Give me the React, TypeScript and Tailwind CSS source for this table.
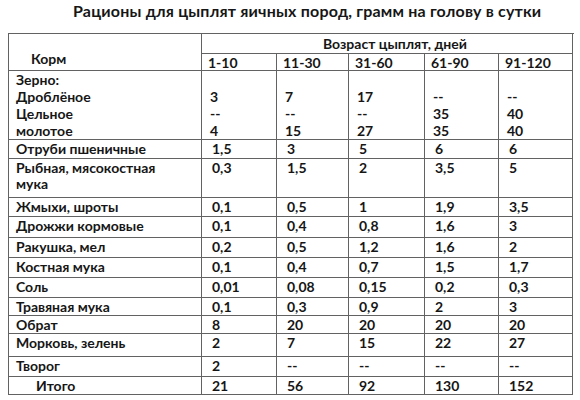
const cols = ['1-10', '11-30', '31-60', '61-90', '91-120'];
const widths = ['w-[75px]', 'w-[72px]', 'w-[76px]', 'w-[74px]', 'w-[74px]'];

type Row = { name: string[]; vals: string[]; h: string; indent?: boolean };

const rows: Row[] = [
  { name: ['Отруби пшеничные'], vals: ['1,5', '3', '5', '6', '6'], h: 'h-[19px]' },
  { name: ['Рыбная, мясокостная', 'мука'], vals: ['0,3', '1,5', '2', '3,5', '5'], h: 'h-[39px]' },
  { name: ['Жмыхи, шроты'], vals: ['0,1', '0,5', '1', '1,9', '3,5'], h: 'h-[19px]' },
  { name: ['Дрожжи кормовые'], vals: ['0,1', '0,4', '0,8', '1,6', '3'], h: 'h-[21px]' },
  { name: ['Ракушка, мел'], vals: ['0,2', '0,5', '1,2', '1,6', '2'], h: 'h-[20px]' },
  { name: ['Костная мука'], vals: ['0,1', '0,4', '0,7', '1,5', '1,7'], h: 'h-[20px]' },
  { name: ['Соль'], vals: ['0,01', '0,08', '0,15', '0,2', '0,3'], h: 'h-[20px]' },
  { name: ['Травяная мука'], vals: ['0,1', '0,3', '0,9', '2', '3'], h: 'h-[18px]' },
  { name: ['Обрат'], vals: ['8', '20', '20', '20', '20'], h: 'h-[18px]' },
  { name: ['Морковь, зелень'], vals: ['2', '7', '15', '22', '27'], h: 'h-[23px]' },
  { name: ['Творог'], vals: ['2', '--', '--', '--', '--'], h: 'h-[20px]' },
  { name: ['Итого'], vals: ['21', '56', '92', '130', '152'], h: 'h-[18px]', indent: true },
];

const grain = [
  ['', '3', '--', '4'],
  ['', '7', '--', '15'],
  ['', '17', '--', '27'],
  ['', '--', '35', '35'],
  ['', '--', '40', '40'],
];

export default function App() {
  return (
    <div className="w-[580px] h-[400px] bg-white text-[#161616] font-['Lato','Noto_Sans',sans-serif] font-bold overflow-hidden">
      <h1 className="h-[33px] pt-[1px] pl-[73px] text-[16px] leading-[20px] tracking-[0.2px]">
        Рационы для цыплят яичных пород, грамм на голову в сутки
      </h1>

      <div className="ml-[8px] w-[566px] border-l border-t border-[#626262] text-[14px]">
        {/* шапка */}
        <div className="flex">
          <div className="w-[193px] h-[37px] border-r border-b border-[#626262] flex items-end pb-[1px] pl-[22px] leading-[17px]">
            <span className="mb-[2px]">Корм</span>
          </div>
          <div className="flex flex-col">
            <div className="h-[20px] border-b border-r border-[#626262] pl-[121px] leading-[20px]">
              Возраст цыплят, дней
            </div>
            <div className="flex">
              {cols.map((c, i) => (
                <div key={c} className={`${widths[i]} h-[17px] border-r border-b border-[#626262] pl-[6px] leading-[17px]`}>
                  {c}
                </div>
              ))}
            </div>
          </div>
        </div>

        {/* зерно */}
        <div className="flex">
          <div className="w-[193px] h-[69px] border-r border-b border-[#626262] pl-[7px] leading-[17px]">
            <div>Зерно:</div>
            <div>Дроблёное</div>
            <div>Цельное</div>
            <div>молотое</div>
          </div>
          {grain.map((g, i) => (
            <div key={i} className={`${widths[i]} h-[69px] border-r border-b border-[#626262] pl-[8px] leading-[17px]`}>
              {g.map((v, j) => (
                <div key={j} className="h-[17px]">{v}</div>
              ))}
            </div>
          ))}
        </div>

        {rows.map((r) => (
          <div key={r.name[0]} className="flex">
            <div className={`w-[193px] ${r.h} border-r border-b border-[#626262] ${r.indent ? 'pl-[27px]' : 'pl-[7px]'} pt-[1px] leading-[16px]`}>
              {r.name.map((n) => (
                <div key={n}>{n}</div>
              ))}
            </div>
            {r.vals.map((v, i) => (
              <div key={i} className={`${widths[i]} ${r.h} border-r border-b border-[#626262] pl-[10px] pt-[1px] leading-[16px]`}>
                {v}
              </div>
            ))}
          </div>
        ))}
      </div>
    </div>
  );
}
